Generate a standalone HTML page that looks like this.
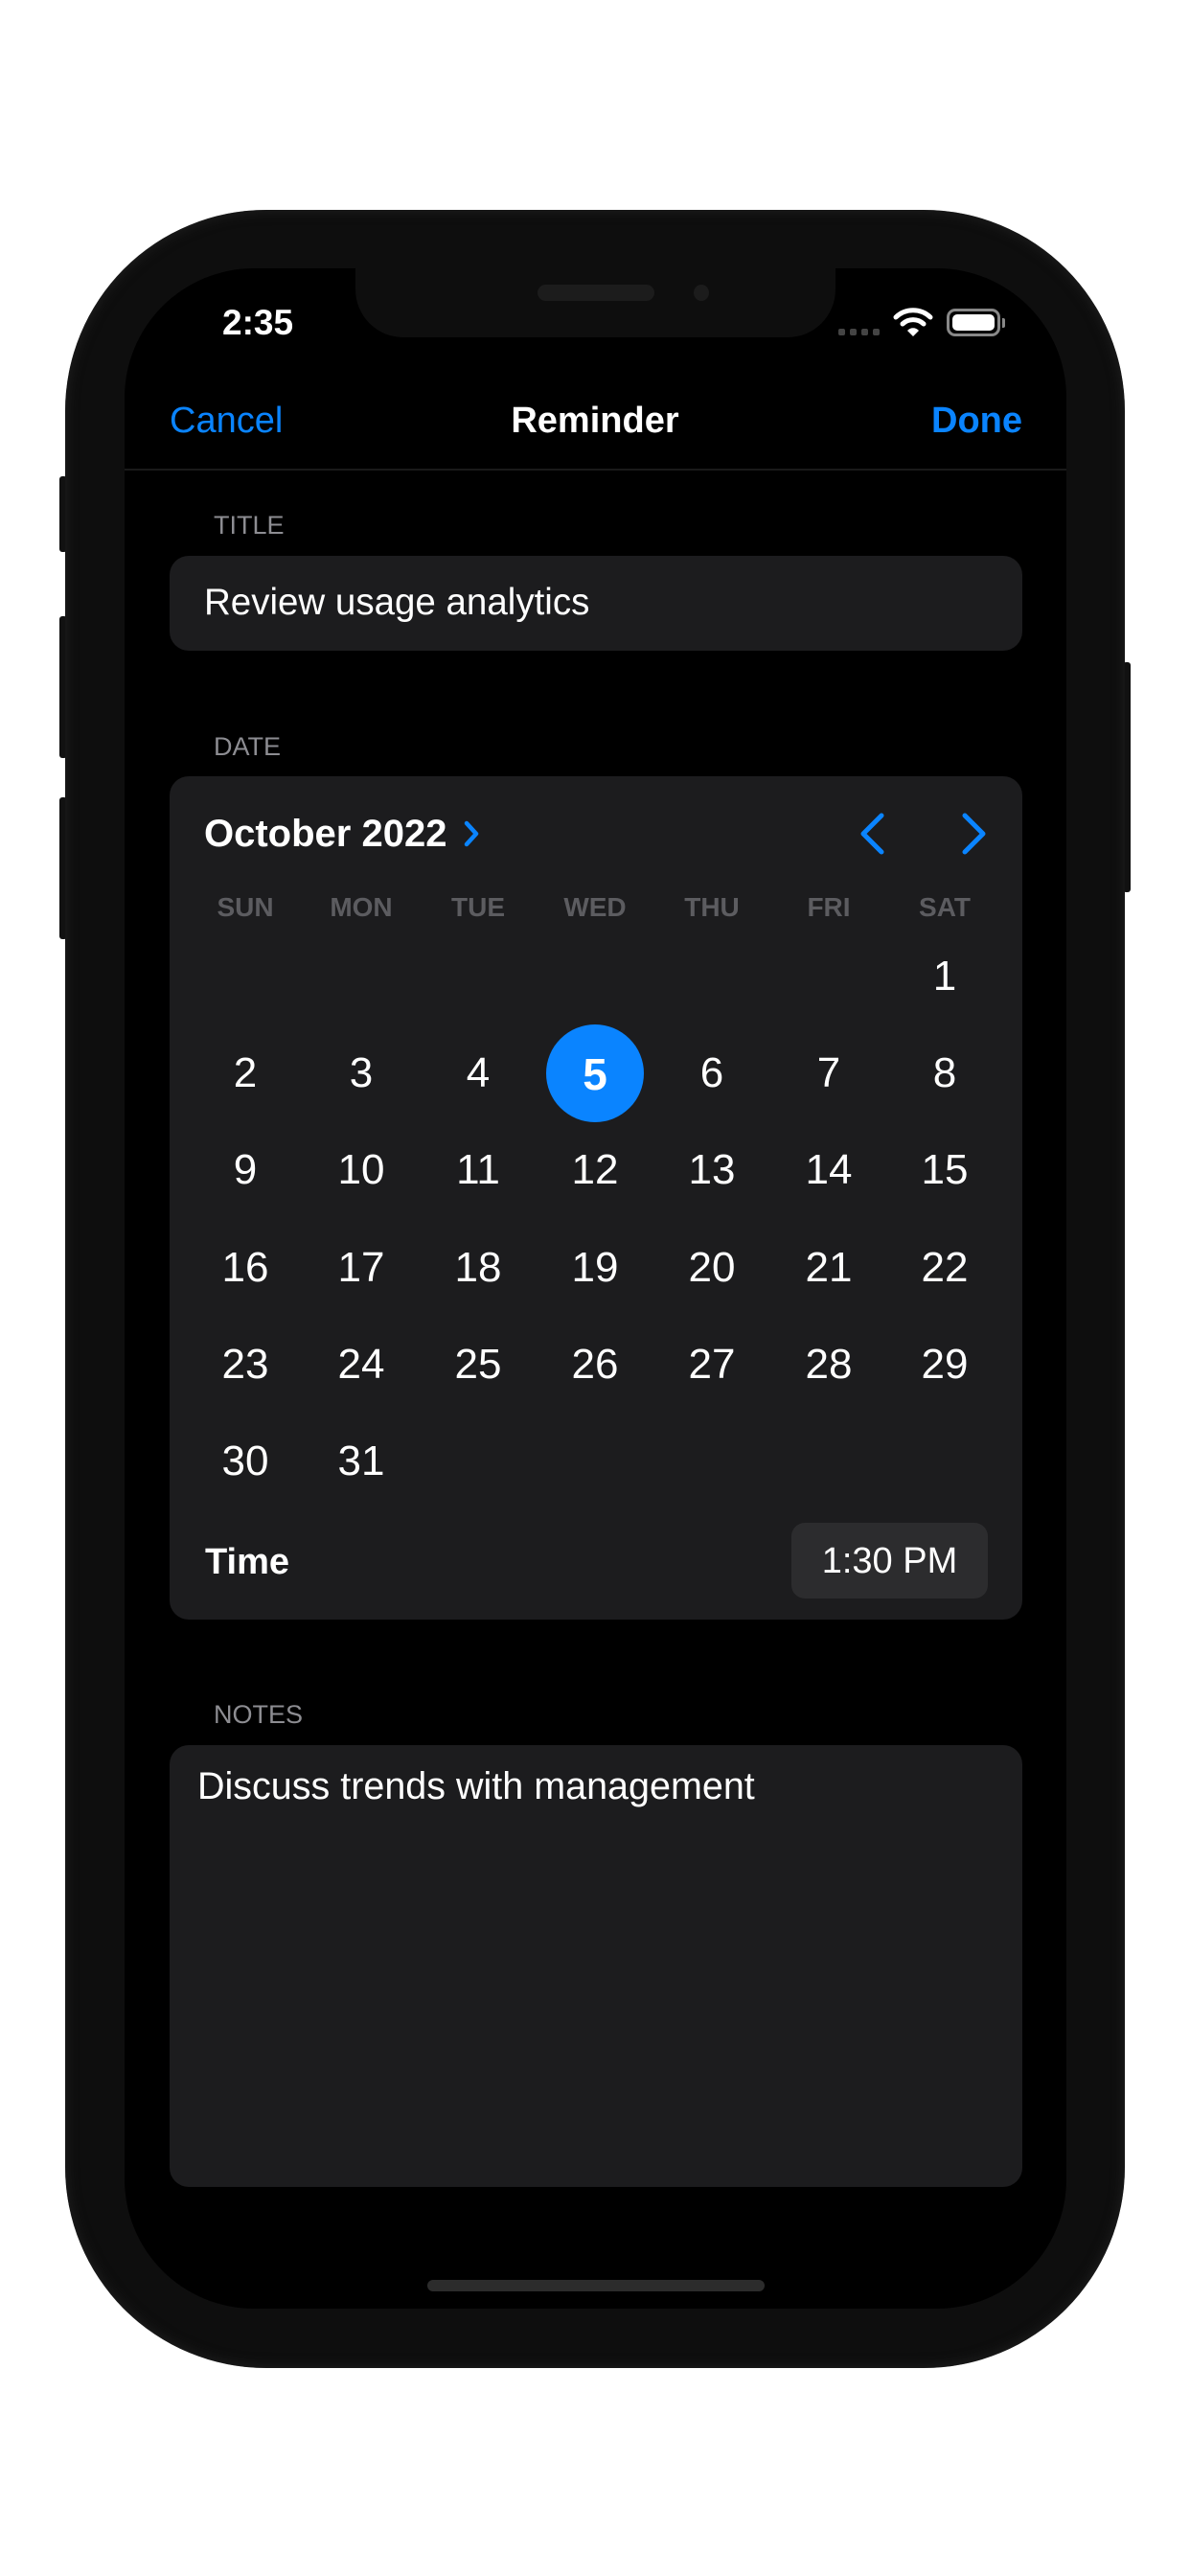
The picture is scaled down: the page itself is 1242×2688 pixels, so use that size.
<!DOCTYPE html>
<html><head><meta charset="utf-8"><style>
*{margin:0;padding:0;box-sizing:border-box}
body{width:1242px;height:2688px;background:#fff;position:relative;overflow:hidden;font-family:"Liberation Sans",sans-serif}
.a{position:absolute}
.t{position:absolute;white-space:nowrap;line-height:1}
.phone{left:68px;top:219px;width:1106px;height:2252px;border-radius:210px;background:#0e0e0e;box-shadow:inset 0 0 14px #222}
.screen{left:130px;top:280px;width:983px;height:2129px;border-radius:135px;background:#000;overflow:hidden}
.btn{background:#111;border-radius:3px}
.card{background:#1c1c1e;border-radius:20px}
.lbl{color:#8d8d92;font-size:27px}
.wd{color:#5c5c60;font-size:28px;font-weight:bold;width:120px;text-align:center}
.d{color:#fff;font-size:44px;width:120px;text-align:center}
</style></head><body>
<div class="a btn" style="left:62px;top:497px;width:8px;height:79px"></div>
<div class="a btn" style="left:62px;top:643px;width:8px;height:148px"></div>
<div class="a btn" style="left:62px;top:832px;width:8px;height:148px"></div>
<div class="a btn" style="left:1172px;top:691px;width:8px;height:240px"></div>
<div class="a phone"></div>
<div class="a screen"></div>
<div class="a" style="left:371px;top:270px;width:501px;height:82px;background:#0e0e0e;border-radius:0 0 50px 50px"></div>
<div class="a" style="left:561px;top:297px;width:122px;height:17px;border-radius:9px;background:#1c1c1c"></div>
<div class="a" style="left:724px;top:297px;width:16px;height:17px;border-radius:50%;background:#1c1c1c"></div>
<div class="t" style="left:232px;top:318px;color:#fff;font-size:37px;font-weight:bold">2:35</div>
<div class="a" style="left:875px;top:343px;width:7px;height:7px;border-radius:2px;background:#444"></div>
<div class="a" style="left:887px;top:343px;width:7px;height:7px;border-radius:2px;background:#444"></div>
<div class="a" style="left:899px;top:343px;width:7px;height:7px;border-radius:2px;background:#444"></div>
<div class="a" style="left:911px;top:343px;width:7px;height:7px;border-radius:2px;background:#444"></div>
<svg class="a" style="left:932px;top:320px" width="42" height="32" viewBox="0 0 42 32"><path d="M3 11 A26 26 0 0 1 39 11" stroke="#fff" stroke-width="5" fill="none" stroke-linecap="round"/><path d="M10 18 A16 16 0 0 1 32 18" stroke="#fff" stroke-width="5" fill="none" stroke-linecap="round"/><path d="M15 25 L21 31 L27 25 A8 8 0 0 0 15 25Z" fill="#fff"/></svg>
<div class="a" style="left:988px;top:322px;width:56px;height:29px;border:3px solid #888;border-radius:9px;padding:3px"><div style="width:100%;height:100%;background:#fff;border-radius:5px"></div></div>
<div class="a" style="left:1046px;top:332px;width:3px;height:10px;background:#888;border-radius:0 2px 2px 0"></div>
<div class="t" style="left:177px;top:420px;color:#0a84ff;font-size:38px">Cancel</div>
<div class="t" style="left:421px;width:400px;text-align:center;top:420px;color:#fff;font-size:38px;font-weight:bold">Reminder</div>
<div class="t" style="left:867px;width:200px;text-align:right;top:420px;color:#0a84ff;font-size:38px;font-weight:bold">Done</div>
<div class="a" style="left:130px;top:489px;width:983px;height:2px;background:#1a1a1a"></div>
<div class="t lbl" style="left:223px;top:535px">TITLE</div>
<div class="a card" style="left:177px;top:580px;width:890px;height:99px"></div>
<div class="t" style="left:213px;top:610px;color:#fff;font-size:38.5px">Review usage analytics</div>
<div class="t lbl" style="left:223px;top:766px">DATE</div>
<div class="a card" style="left:177px;top:810px;width:890px;height:880px"></div>
<div class="t" style="left:213px;top:850px;color:#fff;font-size:40px;font-weight:bold">October 2022</div>
<svg class="a" style="left:482px;top:855px" width="20" height="30" viewBox="0 0 20 30"><path d="M5 4 L15 15 L5 26" stroke="#0a84ff" stroke-width="4.5" fill="none" stroke-linecap="round" stroke-linejoin="round"/></svg>
<svg class="a" style="left:893px;top:846px" width="40" height="48" viewBox="0 0 40 48"><path d="M27 5 L8 24 L27 43" stroke="#0a84ff" stroke-width="5" fill="none" stroke-linecap="round" stroke-linejoin="round"/></svg>
<svg class="a" style="left:998px;top:846px" width="40" height="48" viewBox="0 0 40 48"><path d="M9 5 L28 24 L9 43" stroke="#0a84ff" stroke-width="5" fill="none" stroke-linecap="round" stroke-linejoin="round"/></svg>
<div class="t wd" style="left:196px;top:933px">SUN</div>
<div class="t wd" style="left:317px;top:933px">MON</div>
<div class="t wd" style="left:439px;top:933px">TUE</div>
<div class="t wd" style="left:561px;top:933px">WED</div>
<div class="t wd" style="left:683px;top:933px">THU</div>
<div class="t wd" style="left:805px;top:933px">FRI</div>
<div class="t wd" style="left:926px;top:933px">SAT</div>
<div class="a" style="left:570px;top:1069px;width:102px;height:102px;border-radius:50%;background:#0a84ff"></div>
<div id="g"></div>
<script>
var xs=[256,377,499,621,743,865,986],ys=[1019,1120,1221,1323,1424,1525],h='';
for(var n=1;n<=31;n++){var i=n+5,c=i%7,r=Math.floor(i/7);
h+='<div class="t d" style="left:'+(xs[c]-60)+'px;top:'+(ys[r]-22)+'px;'+(n==5?'font-weight:bold;font-size:46px':'')+'">'+n+'</div>';}
document.getElementById('g').innerHTML=h;
</script>
<div class="t" style="left:214px;top:1611px;color:#fff;font-size:38px;font-weight:bold">Time</div>
<div class="a" style="left:826px;top:1589px;width:205px;height:79px;border-radius:14px;background:#2c2c2e"></div>
<div class="t" style="left:826px;width:205px;text-align:center;top:1610px;color:#fff;font-size:38px">1:30 PM</div>
<div class="t lbl" style="left:223px;top:1776px">NOTES</div>
<div class="a card" style="left:177px;top:1821px;width:890px;height:461px"></div>
<div class="t" style="left:206px;top:1845px;color:#fff;font-size:39.5px">Discuss trends with management</div>
<div class="a" style="left:446px;top:2379px;width:352px;height:12px;border-radius:6px;background:#2c2c2c"></div>
</body></html>
